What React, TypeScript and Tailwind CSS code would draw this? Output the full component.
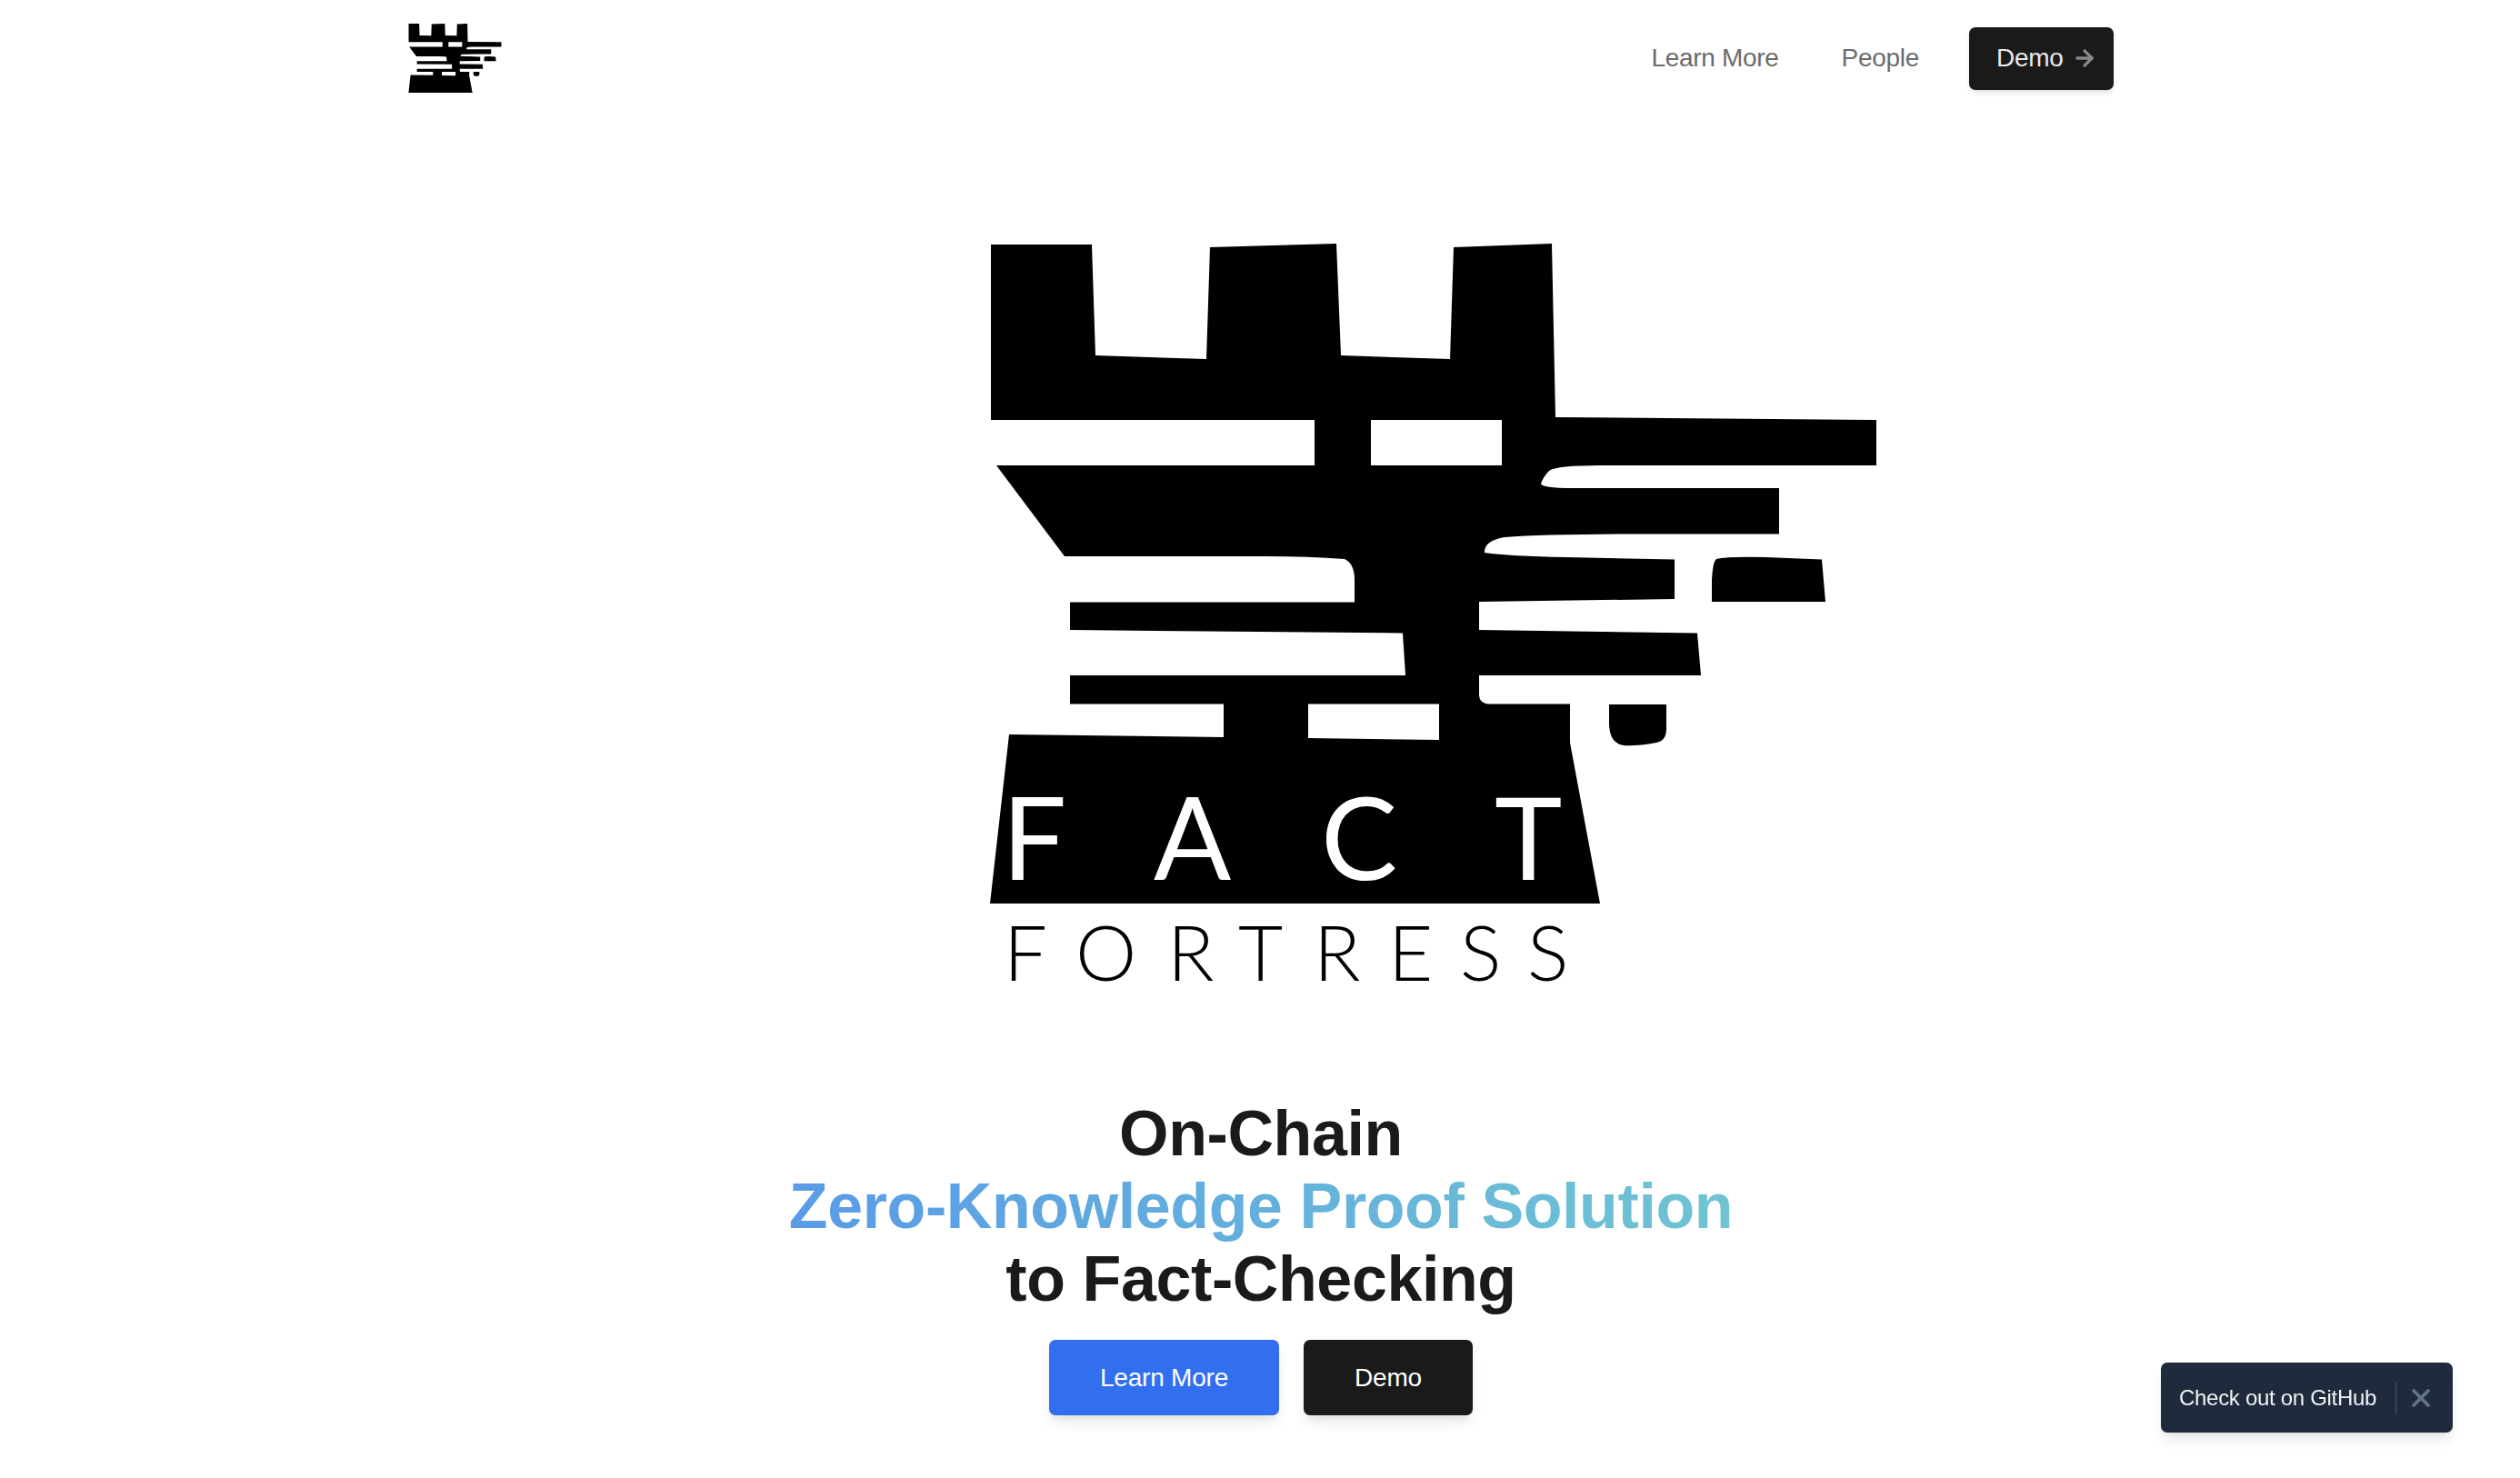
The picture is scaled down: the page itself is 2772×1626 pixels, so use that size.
import { ArrowRight, X } from "lucide-react";

const towerPath =
  "M1090 269 L1201 269 L1205 391 L1327 395 L1331 272 L1470 268 L1475 391 L1595 395 L1599 272 L1707 268 L1711 459 L2064 462 L2064 512 L1760 512 Q1712 512 1704 518 Q1698 524 1695 532 Q1696 537 1730 537 L1957 537 L1957 587.5 L1800 587.5 Q1700 587.5 1655 591 Q1632 595 1633 608 Q1660 612 1723 613 L1842 615.5 L1842 659 L1627 662 L1627 693 L1867 696.5 L1871 743 L1627 743 L1627 764 Q1627 774.6 1640 774.6 L1727 774.6 L1727 817 L1760 994 L1089 994 L1110 808 L1346 811 L1346 774.6 L1177 774.6 L1177 743 L1546 743 L1543 696.5 L1177 693 L1177 662.5 L1490 662.5 L1490 638 Q1490 620 1479 615 Q1440 612 1392 612 L1171 612 L1096 512 L1446 512 L1446 462 L1090 462 Z " +
  "M1508 462 L1652 462 L1652 512 L1508 512 Z " +
  "M1439 774.6 L1583 774.6 L1583 814 L1439 812 Z " +
  "M1883 662 L1883 638 Q1884 618 1888 615 Q1900 612 1942 613 L2004 615.5 L2008 662 Z " +
  "M1770 775 L1833 775 L1833 802 Q1833 815 1822 817 Q1800 821 1786 820 Q1771 818 1770 798 Z";

function HeroLogo() {
  return (
    <svg viewBox="1086 268 982 840" className="ml-[380px] h-[840px] w-[982px]">
      <path d={towerPath} fill="#000" fillRule="evenodd" />
      <text
        x="1102 1269 1453 1644"
        y="968"
        fontSize="126"
        fill="#fff"
        className="[font-family:Lato,sans-serif] font-normal"
      >
        FACT
      </text>
      <text
        x="1104 1183 1284 1362 1445 1527 1606 1680"
        y="1079"
        fontSize="85"
        fill="#000"
        className="[font-family:Lato,sans-serif] font-light"
      >
        FORTRESS
      </text>
    </svg>
  );
}

export default function App() {
  return (
    <div className="relative min-h-screen overflow-hidden bg-white pl-[2px] [font-family:'Liberation_Sans',Arial,sans-serif]">
      <nav className="mx-auto flex w-[1876px] items-center justify-between py-[26px]">
        <svg viewBox="1086 268 982 726" className="h-[76px] w-[103px]">
          <path d={towerPath} fill="#000" fillRule="evenodd" />
        </svg>
        <div className="flex items-center">
          <a className="text-[28px] tracking-[-0.3px] text-[#6b6b6b]">Learn More</a>
          <a className="ml-[69px] text-[28px] tracking-[-0.3px] text-[#6b6b6b]">People</a>
          <button className="ml-[55px] flex h-[69px] w-[159px] items-center gap-[9px] rounded-[7px] bg-[#1a1a1a] pl-[30px] text-[28px] tracking-[-0.3px] text-[#e8e8e8] shadow-md">
            Demo
            <ArrowRight size={28} strokeWidth={2.8} className="text-[#8a8a8a]" />
          </button>
        </div>
      </nav>

      <main className="mt-[140px] flex flex-col items-center">
        <HeroLogo />
        <h1 className="mt-[99px] text-center text-[70px] leading-[80px] font-bold tracking-[-0.4px] text-[#1a1a1a]">
          On-Chain
          <br />
          <span className="bg-linear-to-r from-[#5a9be6] to-[#70c4d2] bg-clip-text text-transparent">
            Zero-Knowledge Proof Solution
          </span>
          <br />
          to Fact-Checking
        </h1>
        <div className="mt-[27px] flex gap-[27px]">
          <button className="h-[83px] w-[253px] rounded-[7px] bg-[#316fee] text-[28px] tracking-[-0.2px] text-white shadow-lg">
            Learn More
          </button>
          <button className="h-[83px] w-[186px] rounded-[7px] bg-[#1a1a1a] text-[28px] tracking-[-0.2px] text-white shadow-lg">
            Demo
          </button>
        </div>
      </main>

      <div className="fixed right-[74px] bottom-[50px] flex h-[77px] w-[321px] items-center rounded-[7px] bg-[#1f2a3c] pl-[20px] shadow-lg">
        <span className="text-[24px] tracking-[-0.3px] text-[#f1f3f5]">Check out on GitHub</span>
        <span className="ml-[21px] h-[36px] w-px bg-[#4b5563]" />
        <X size={32} strokeWidth={2.8} className="ml-[11px] text-[#64748b]" />
      </div>
    </div>
  );
}
